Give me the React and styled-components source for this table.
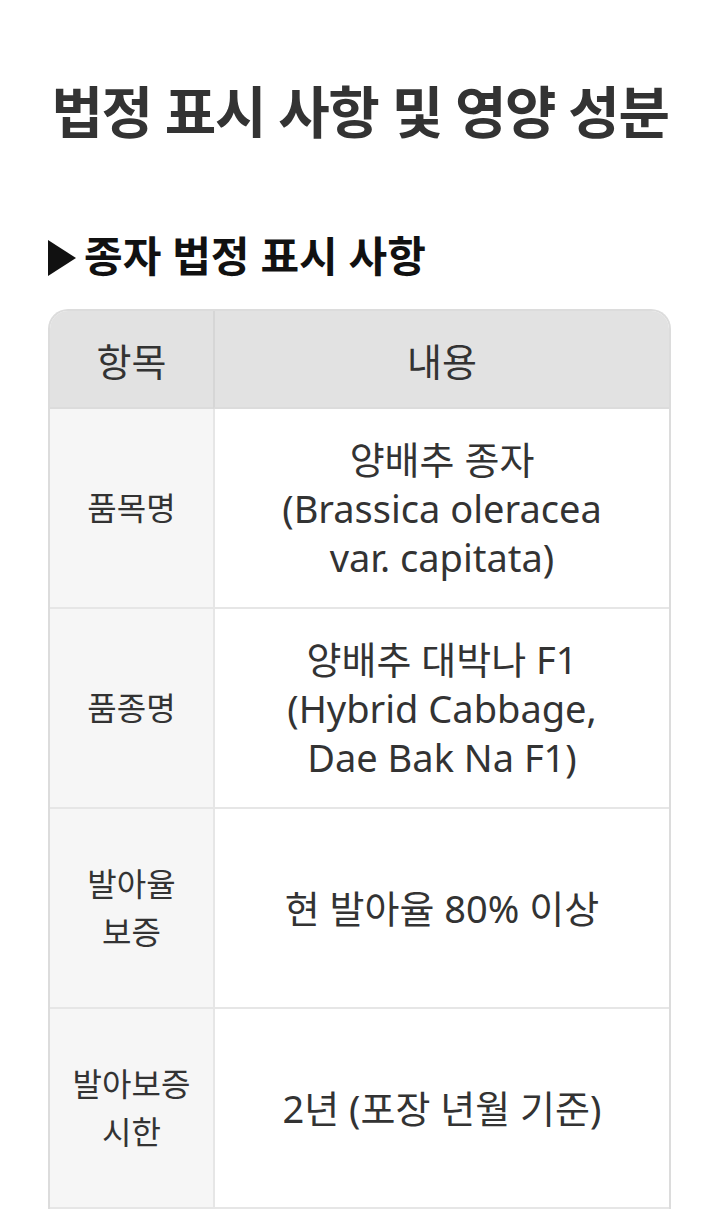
import React from 'react'
import styled, { createGlobalStyle } from 'styled-components'

const GlobalStyle = createGlobalStyle`
  html, body {
    margin: 0;
    padding: 0;
    background: #ffffff;
  }
  body {
    font-family: "Noto Sans", "Noto Sans CJK KR", sans-serif;
    color: #333333;
  }
`

const Page = styled.div`
  padding: 73px 48px 0 48px;
`

const Title = styled.h1`
  margin: 0;
  text-align: center;
  font-size: 56px;
  font-weight: 700;
  letter-spacing: -1.4px;
  line-height: 76px;
  color: #333333;
`

const SectionTitle = styled.h2`
  margin: 79px 0 0 0;
  display: flex;
  align-items: center;
  gap: 8px;
  font-size: 42px;
  font-weight: 700;
  line-height: 56px;
  color: #111111;
`

const Arrow = styled.span`
  display: inline-block;
  width: 0;
  height: 0;
  border-top: 18px solid transparent;
  border-bottom: 18px solid transparent;
  border-left: 28px solid #111111;
  margin-top: 4px;
`

const Table = styled.div`
  margin-top: 25px;
  display: grid;
  grid-template-columns: 163px 1fr;
  border: 2px solid #dcdcdc;
  border-bottom: none;
  border-radius: 20px 20px 0 0;
  overflow: hidden;
  width: 623px;
  box-sizing: border-box;
`

const HeadCell = styled.div`
  background: #e2e2e2;
  height: 96px;
  display: flex;
  align-items: center;
  justify-content: center;
  font-size: 38px;
  color: #333333;
  border-bottom: 2px solid #dcdcdc;
  border-left: ${p => (p.$first ? 'none' : '2px solid #d6d6d6')};
`

const LabelCell = styled.div`
  background: #f6f6f6;
  height: 200px;
  display: flex;
  align-items: center;
  justify-content: center;
  text-align: center;
  padding: 0 18px;
  box-sizing: border-box;
  font-size: 32px;
  line-height: 48px;
  color: #333333;
  border-bottom: 2px solid #e6e6e6;
  word-break: keep-all;
`

const ValueCell = styled.div`
  background: #ffffff;
  height: 200px;
  display: flex;
  align-items: center;
  justify-content: center;
  text-align: center;
  padding: 0 12px;
  box-sizing: border-box;
  font-size: 38px;
  line-height: 49px;
  color: #333333;
  border-left: 2px solid #e6e6e6;
  border-bottom: 2px solid #e6e6e6;
  word-break: keep-all;
`

const rows = [
  { label: '품목명', value: ['양배추 종자', '(Brassica oleracea', 'var. capitata)'] },
  { label: '품종명', value: ['양배추 대박나 F1', '(Hybrid Cabbage,', 'Dae Bak Na F1)'] },
  { label: '발아율 보증', value: ['현 발아율 80% 이상'] },
  { label: '발아보증 시한', value: ['2년 (포장 년월 기준)'] },
]

export default function App() {
  return (
    <Page>
      <GlobalStyle />
      <Title>법정 표시 사항 및 영양 성분</Title>
      <SectionTitle>
        <Arrow />
        종자 법정 표시 사항
      </SectionTitle>
      <Table>
        <HeadCell $first>항목</HeadCell>
        <HeadCell>내용</HeadCell>
        {rows.map(row => (
          <React.Fragment key={row.label}>
            <LabelCell>{row.label}</LabelCell>
            <ValueCell>
              <div>
                {row.value.map((line, i) => (
                  <div key={i}>{line}</div>
                ))}
              </div>
            </ValueCell>
          </React.Fragment>
        ))}
      </Table>
    </Page>
  )
}
